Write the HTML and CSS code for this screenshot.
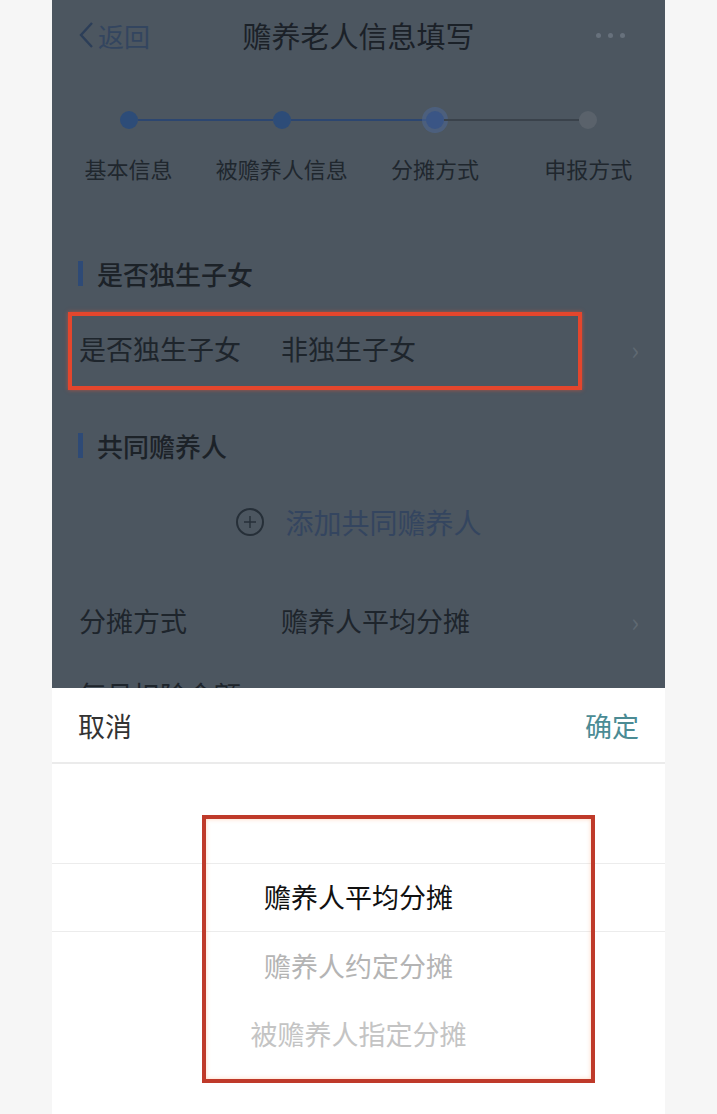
FILE: index.html
```html
<!DOCTYPE html>
<html lang="zh-CN">
<head>
    <meta charset="UTF-8">
    <meta name="viewport" content="width=device-width, initial-scale=1.0">
    <title>赡养老人信息填写</title>
    <link rel="stylesheet" href="styles.css">
</head>
<body>
    <div class="screen">
        <div class="page">
            <header class="navbar">
                <a class="back">
                    <svg width="16" height="28" viewBox="0 0 16 28"><path d="M14 2 L3 14 L14 26" fill="none" stroke="#2c3e58" stroke-width="2.4"/></svg>
                    <span>返回</span>
                </a>
                <h1 class="nav-title">赡养老人信息填写</h1>
                <span class="more"><i></i><i></i><i></i></span>
            </header>

            <div class="steps">
                <div class="track">
                    <span class="pad"></span>
                    <span class="dot done"></span>
                    <span class="line done"></span>
                    <span class="dot done"></span>
                    <span class="line done"></span>
                    <span class="dot active"></span>
                    <span class="line"></span>
                    <span class="dot"></span>
                    <span class="pad"></span>
                </div>
                <div class="step-labels">
                    <span>基本信息</span>
                    <span>被赡养人信息</span>
                    <span>分摊方式</span>
                    <span>申报方式</span>
                </div>
            </div>

            <section class="group">
                <h3 class="group-title">是否独生子女</h3>
                <div class="cell">
                    <span class="cell-label">是否独生子女</span>
                    <span class="cell-value">非独生子女</span>
                    <span class="arrow">›</span>
                    <span class="mark mark-row"></span>
                </div>
            </section>

            <section class="group">
                <h3 class="group-title">共同赡养人</h3>
                <div class="add-row">
                    <svg width="30" height="30" viewBox="0 0 30 30"><circle cx="15" cy="15" r="13" fill="none" stroke="#262f38" stroke-width="2"/><path d="M15 9 V21 M9 15 H21" stroke="#262f38" stroke-width="1.4"/></svg>
                    <span>添加共同赡养人</span>
                </div>
            </section>

            <section class="group">
                <div class="cell">
                    <span class="cell-label">分摊方式</span>
                    <span class="cell-value">赡养人平均分摊</span>
                    <span class="arrow">›</span>
                </div>
                <div class="cell cell-under">
                    <span class="cell-label">每月扣除金额</span>
                    <span class="cell-value"></span>
                </div>
            </section>
        </div>

        <div class="sheet">
            <div class="sheet-head">
                <span class="cancel">取消</span>
                <span class="confirm">确定</span>
            </div>
            <div class="picker">
                <div class="picker-item selected">赡养人平均分摊</div>
                <div class="picker-item">赡养人约定分摊</div>
                <div class="picker-item far">被赡养人指定分摊</div>
            </div>
            <span class="mark mark-picker"></span>
        </div>
    </div>
</body>
</html>
```

FILE: styles.css
```css
body {
    margin: 0;
    background: #f6f6f6;
    font-family: "Noto Sans CJK SC", "Noto Sans", sans-serif;
}
.screen {
    position: relative;
    width: 613px;
    height: 1114px;
    margin-left: 52px;
    overflow: hidden;
    background: #4c5660;
}
.page {
    color: #1e252c;
}
.navbar {
    display: flex;
    align-items: center;
    height: 70px;
    padding: 0 26px;
}
.back {
    display: flex;
    align-items: center;
    gap: 4px;
    width: 130px;
    color: #33455f;
    font-size: 26px;
    white-space: nowrap;
}
.nav-title {
    flex: 1;
    margin: 0;
    text-align: center;
    font-size: 29px;
    font-weight: normal;
    color: #1b2128;
    white-space: nowrap;
}
.more {
    display: flex;
    justify-content: flex-end;
    gap: 7px;
    width: 130px;
    padding-right: 14px;
    box-sizing: border-box;
}
.more i {
    width: 5px;
    height: 5px;
    border-radius: 50%;
    background: #67717c;
}
.steps {
    height: 140px;
    padding-top: 41px;
    box-sizing: border-box;
}
.track {
    display: flex;
    align-items: center;
    height: 18px;
}
.track .pad {
    flex: 0 0 67.6px;
}
.dot {
    flex: 0 0 18px;
    height: 18px;
    border-radius: 50%;
    background: #5a626b;
}
.dot.done {
    background: #2d4c78;
}
.dot.active {
    background: #3a5585;
    box-shadow: 0 0 0 4px rgba(76, 104, 150, 0.55);
}
.line {
    flex: 1;
    height: 2px;
    background: #3a424b;
}
.line.done {
    background: #2c4670;
}
.step-labels {
    display: grid;
    grid-template-columns: repeat(4, 1fr);
    margin-top: 24px;
    text-align: center;
    font-size: 22px;
    line-height: 30px;
    color: #20272e;
}
.group {
    margin-top: 28px;
}
.group:nth-of-type(2) {
    margin-top: 22px;
}
.group:nth-of-type(3) {
    margin-top: 17px;
}
.group-title {
    display: flex;
    align-items: center;
    gap: 14px;
    height: 70px;
    margin: 0;
    padding-left: 26px;
    font-size: 26px;
    font-weight: 500;
    color: #1c2228;
}
.group-title::before {
    content: "";
    width: 5px;
    height: 25px;
    background: #2e4a76;
}
.cell {
    position: relative;
    display: flex;
    align-items: center;
    height: 80px;
    padding: 0 26px 0 27px;
    font-size: 27px;
}
.cell-under {
    height: 68px;
}
.cell-label {
    width: 202px;
    white-space: nowrap;
}
.cell-value {
    flex: 1;
}
.arrow {
    color: #5f6972;
    font-size: 26px;
}
.add-row {
    display: flex;
    align-items: center;
    justify-content: center;
    gap: 20px;
    height: 83px;
    font-size: 28px;
    color: #34455f;
}
.mark {
    position: absolute;
    box-sizing: border-box;
    border: 4px solid #e4462d;
}
.mark-row {
    left: 16px;
    top: 4px;
    width: 514px;
    height: 78px;
    box-shadow: 0 0 4px rgba(240, 80, 50, 0.6);
}
.sheet {
    position: absolute;
    left: 0;
    right: 0;
    bottom: 0;
    height: 426px;
    background: #fff;
}
.sheet-head {
    display: flex;
    justify-content: space-between;
    align-items: center;
    height: 74px;
    padding: 0 26px;
    border-bottom: 2px solid #ebebeb;
    font-size: 27px;
}
.cancel {
    color: #333;
}
.confirm {
    color: #4b8b94;
}
.picker {
    padding-top: 99px;
}
.picker-item {
    height: 68px;
    line-height: 68px;
    text-align: center;
    font-size: 27px;
    color: #b4b4b4;
}
.picker-item.selected {
    height: 67px;
    border-top: 1px solid #ececec;
    border-bottom: 1px solid #ececec;
    line-height: 66px;
    color: #111;
}
.picker-item.far {
    color: #c4c4c4;
}
.mark-picker {
    left: 150px;
    top: 127px;
    width: 393px;
    height: 268px;
    border-color: #bf3a2a;
    box-shadow: inset 0 0 4px rgba(255, 170, 120, 0.5);
}
```
